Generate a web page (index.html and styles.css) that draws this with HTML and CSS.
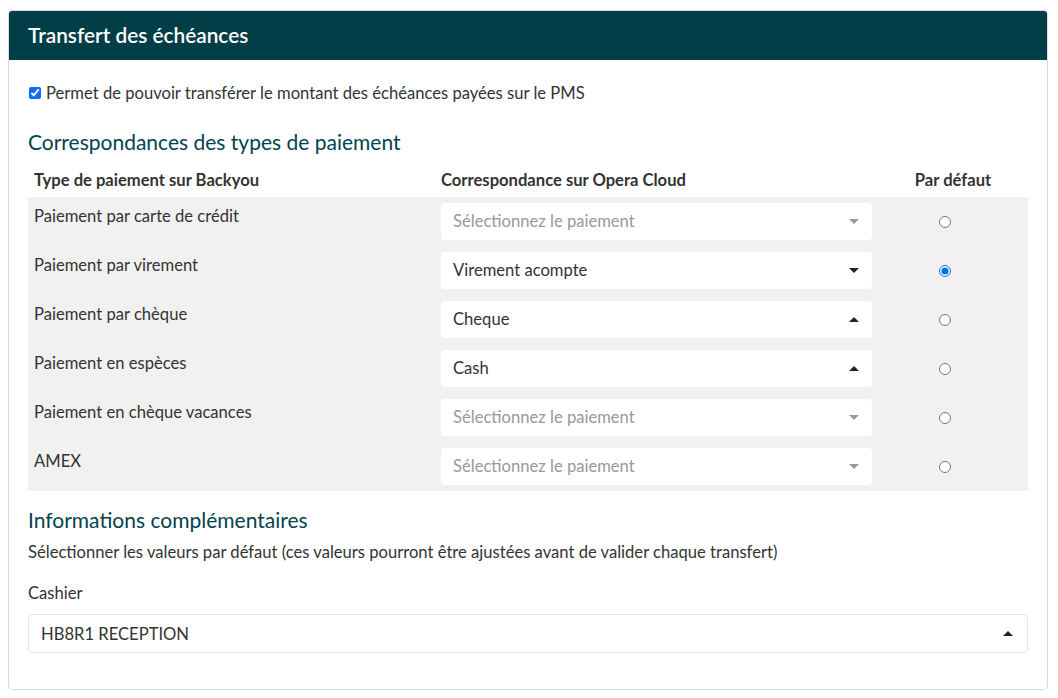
FILE: index.html
```html
<!DOCTYPE html>
<html lang="fr">
<head>
<meta charset="utf-8">
<link rel="stylesheet" href="styles.css">
</head>
<body>
<div class="card">
  <div class="card-header">Transfert des échéances</div>
  <div class="card-body">
    <label class="check"><input type="checkbox" checked> Permet de pouvoir transférer le montant des échéances payées sur le PMS</label>
    <h2 class="section-title">Correspondances des types de paiement</h2>
    <table class="map">
      <thead>
        <tr><th class="c1">Type de paiement sur Backyou</th><th class="c2">Correspondance sur Opera Cloud</th><th class="c3">Par défaut</th></tr>
      </thead>
      <tbody>
        <tr><td class="name">Paiement par carte de crédit</td><td><div class="select placeholder"><span>Sélectionnez le paiement</span><i class="caret down"></i></div></td><td class="c3"><input type="radio" name="def"></td></tr>
        <tr><td class="name">Paiement par virement</td><td><div class="select"><span>Virement acompte</span><i class="caret down"></i></div></td><td class="c3"><input type="radio" name="def" checked></td></tr>
        <tr><td class="name">Paiement par chèque</td><td><div class="select"><span>Cheque</span><i class="caret up"></i></div></td><td class="c3"><input type="radio" name="def"></td></tr>
        <tr><td class="name">Paiement en espèces</td><td><div class="select"><span>Cash</span><i class="caret up"></i></div></td><td class="c3"><input type="radio" name="def"></td></tr>
        <tr><td class="name">Paiement en chèque vacances</td><td><div class="select placeholder"><span>Sélectionnez le paiement</span><i class="caret down"></i></div></td><td class="c3"><input type="radio" name="def"></td></tr>
        <tr><td class="name">AMEX</td><td><div class="select placeholder"><span>Sélectionnez le paiement</span><i class="caret down"></i></div></td><td class="c3"><input type="radio" name="def"></td></tr>
      </tbody>
    </table>
    <h2 class="section-title info">Informations complémentaires</h2>
    <p class="hint">Sélectionner les valeurs par défaut (ces valeurs pourront être ajustées avant de valider chaque transfert)</p>
    <div class="field-label">Cashier</div>
    <div class="select bordered"><span>HB8R1 RECEPTION</span><i class="caret up"></i></div>
  </div>
</div>
</body>
</html>
```
FILE: styles.css
```css
* { box-sizing: border-box; }
html, body { margin: 0; background: #fff; }
body {
  font-family: Lato, "Open Sans", "Liberation Sans", sans-serif;
  font-size: 16.6px;
  color: #333;
  padding: 10px 10px 9px 8px;
}
.card {
  border: 1px solid #dcdcdc;
  border-radius: 4px;
  overflow: hidden;
}
.card-header {
  background: #023e48;
  color: #fff;
  font-size: 20.8px;
  font-weight: 600;
  height: 50px;
  line-height: 50px;
  padding-left: 20px;
  margin: -1px -1px 0 -1px;
  border-radius: 4px 4px 0 0;
}
.card-body {
  padding: 22px 19px 36px 19px;
}
.check {
  display: flex;
  align-items: center;
  gap: 5px;
  line-height: 22px;
}
.check input {
  margin: 0 0 0 1px;
  width: 12px;
  height: 12px;
  accent-color: #0a6cf5;
}
.section-title {
  font-size: 21px;
  font-weight: 400;
  color: #02434e;
  margin: 25px 0 0 0;
  line-height: 26px;
}
.map {
  width: 1000px;
  border-collapse: collapse;
  margin-top: 10px;
}
.map th {
  text-align: left;
  font-weight: 700;
  line-height: 22px;
  padding: 4px 6px 6px 6px;
}
.map th.c1 { width: 407px; }
.map th.c2 { width: 443px; }
.map th.c3, .map td.c3 { text-align: center; }
.map tbody { background: #f1f1f1; }
.map td {
  vertical-align: top;
  padding: 6px 6px;
  height: 49px;
  line-height: 23px;
}
.map td.name { padding-top: 8px; padding-bottom: 4px; }
.map td.c3 { vertical-align: middle; padding-right: 22px; }
.map td.c3 input {
  margin: 0;
  width: 12px;
  height: 12px;
  accent-color: #0a6cf5;
  display: block;
  margin: 0 auto;
}
.select {
  height: 37px;
  background: #fff;
  border-radius: 4px;
  display: flex;
  align-items: center;
  justify-content: space-between;
  padding: 0 12px 0 12px;
  color: #333;
}
.select.placeholder { color: #999; }
.caret {
  width: 0;
  height: 0;
  border-left: 5px solid transparent;
  border-right: 5px solid transparent;
  margin-right: 1px;
}
.caret.down { border-top: 5px solid #222; }
.caret.up { border-bottom: 5px solid #222; }
.placeholder .caret.down { border-top-color: #999; }
.info { margin-top: 16px; }
.hint {
  margin: 8px 0 0 0;
  line-height: 22px;
}
.field-label {
  margin-top: 19px;
  line-height: 22px;
}
.select.bordered {
  margin-top: 10px;
  height: 39px;
  border: 1px solid #e6e6e6;
  padding-right: 13px;
}
```
